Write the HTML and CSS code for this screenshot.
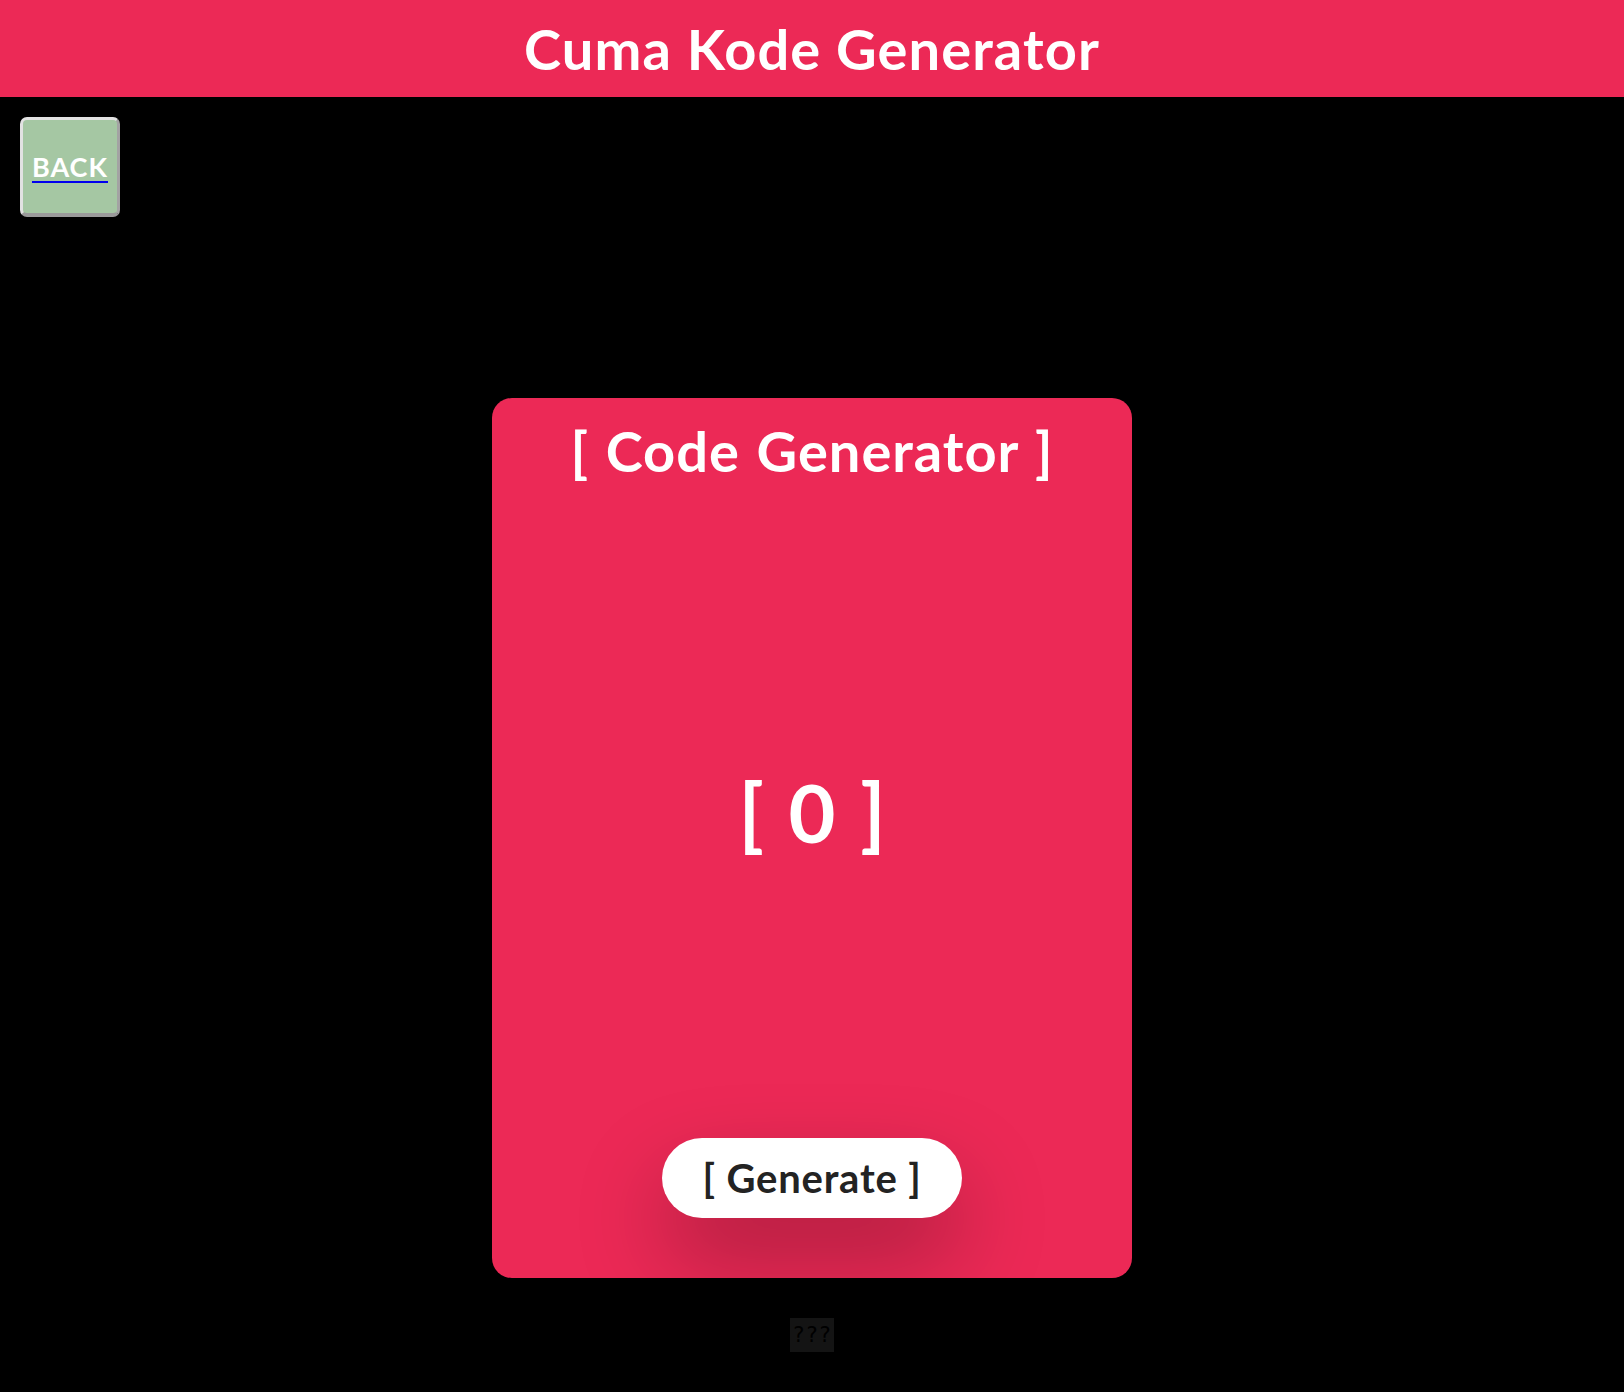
FILE: index.html
```html
<!DOCTYPE html>
<html lang="id">
<head>
<meta charset="utf-8">
<title>Cuma Kode Generator</title>
<link rel="stylesheet" href="styles.css">
</head>
<body>
<header class="topbar">
  <h1 class="topbar-title">Cuma Kode Generator</h1>
</header>
<nav class="nav">
  <div class="back-btn">
    <a href="#" class="back-link"><span class="back-text">BACK</span></a>
  </div>
</nav>
<main class="main">
  <section class="card">
    <h2 class="card-title">[ Code Generator ]</h2>
    <div class="code">[ 0 ]</div>
    <button class="gen-btn" type="button">[ Generate ]</button>
  </section>
  <p class="footer"><span class="footer-mark">???</span></p>
</main>
</body>
</html>
```

FILE: styles.css
```css
html, body {
  margin: 0;
  padding: 0;
  background: #000;
}

body {
  font-family: "Lato", "Noto Sans", sans-serif;
  color: #fff;
}

.topbar {
  background: #ec2956;
  height: 97px;
  display: flex;
  align-items: center;
  justify-content: center;
}

.topbar-title {
  margin: 0;
  font-size: 56px;
  font-weight: 700;
  line-height: 67px;
  letter-spacing: 1.1px;
  color: #fff;
}

.nav {
  padding: 20px 0 0 20px;
}

.back-btn {
  box-sizing: border-box;
  width: 100px;
  height: 100px;
  background: #a5c7a3;
  border-style: solid;
  border-width: 3px 3px 4px 3px;
  border-color: #e2e2e2 #a3a3a3 #9a9a9a #e2e2e2;
  border-radius: 7px;
  display: flex;
  align-items: center;
  justify-content: center;
}

.back-link {
  color: #0000ee;
  text-decoration: underline;
  text-decoration-thickness: 2px;
  text-underline-offset: 4px;
  font-size: 27px;
  font-weight: 700;
  line-height: 1;
  letter-spacing: 1px;
}

.back-text {
  color: #fff;
}

.main {
  display: flex;
  flex-direction: column;
  align-items: center;
  padding-top: 181px;
}

.card {
  box-sizing: border-box;
  width: 640px;
  height: 880px;
  background: #ec2956;
  border-radius: 20px;
  padding: 19px 0 60px;
  display: flex;
  flex-direction: column;
  align-items: center;
  overflow: hidden;
}

.card-title {
  margin: 0;
  font-size: 56px;
  font-weight: 700;
  line-height: 67px;
  letter-spacing: 1px;
  word-spacing: 2px;
  color: #fff;
}

.code {
  flex: 1;
  display: flex;
  align-items: center;
  justify-content: center;
  font-size: 81px;
  font-weight: 700;
  color: #fff;
  word-spacing: 5px;
}

.gen-btn {
  width: 300px;
  height: 80px;
  border: none;
  border-radius: 40px;
  background: #fff;
  color: #232323;
  font-family: "Lato", "Noto Sans", sans-serif;
  font-size: 40px;
  font-weight: 700;
  letter-spacing: 0.8px;
  padding: 0;
  box-shadow: 0 40px 90px rgba(0, 0, 0, 0.28);
}

.footer {
  margin: 40px 0 0;
  text-align: center;
}

.footer-mark {
  display: inline-block;
  background: #141414;
  color: #000;
  font-family: "DejaVu Sans", sans-serif;
  font-size: 21px;
  line-height: 34px;
  letter-spacing: 2px;
  padding: 0 1px 0 3px;
}
```
